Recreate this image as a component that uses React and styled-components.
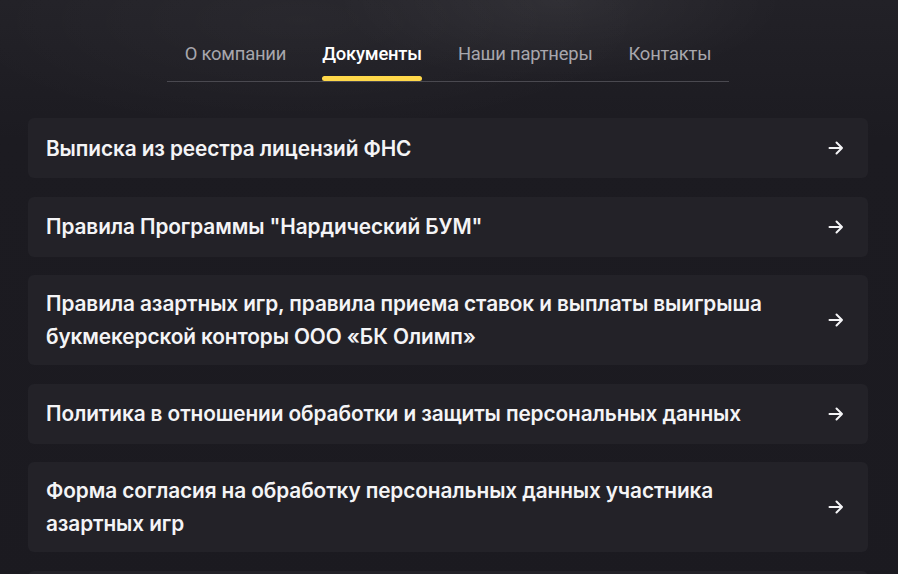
import React from "react";
import styled, { createGlobalStyle } from "styled-components";

const GlobalStyle = createGlobalStyle`
  html, body {
    margin: 0;
    padding: 0;
    background: #1b1a20;
  }
  * {
    box-sizing: border-box;
  }
`;

const Page = styled.div`
  min-height: 574px;
  background:
    radial-gradient(ellipse 320px 120px at 560px 0px, rgba(255, 255, 255, 0.06), transparent 70%),
    radial-gradient(ellipse 500px 160px at 300px 20px, rgba(255, 255, 255, 0.035), transparent 70%),
    linear-gradient(180deg, #222127 0px, #1c1b21 140px, #1b1a20 100%);
  padding: 36px 30px 0 28px;
  font-family: Inter, "Noto Sans", sans-serif;
  overflow: hidden;
`;

const Tabs = styled.nav`
  display: flex;
  justify-content: center;
  gap: 36px;
  width: 562px;
  margin: 0 auto;
  padding: 0 17px;
  border-bottom: 1px solid #4a4950;
`;

const Tab = styled.a`
  position: relative;
  display: block;
  padding: 6px 0 15px;
  font-family: Roboto, "Liberation Sans", sans-serif;
  font-size: 18.4px;
  line-height: 24px;
  letter-spacing: -0.2px;
  color: ${(p) => (p.$active ? "#ffffff" : "#a8a7ad")};
  font-weight: ${(p) => (p.$active ? 500 : 400)};
  text-decoration: none;
  cursor: pointer;

  &::after {
    content: "";
    display: ${(p) => (p.$active ? "block" : "none")};
    position: absolute;
    left: 0;
    right: 0;
    bottom: 0;
    height: 5px;
    border-radius: 3px;
    background: #ffd84a;
  }
`;

const List = styled.div`
  display: flex;
  flex-direction: column;
  gap: 18.5px;
  margin-top: 36px;
`;

const DocRow = styled.a`
  display: flex;
  align-items: center;
  justify-content: space-between;
  gap: 40px;
  min-height: 60px;
  padding: 12px 24px 12px 18px;
  background: #232228;
  border-radius: 6px;
  color: #f4f4f6;
  text-decoration: none;
  cursor: pointer;
`;

const DocTitle = styled.span`
  font-size: 20.8px;
  font-weight: 600;
  line-height: 33px;
  letter-spacing: -0.1px;
  max-width: 740px;
`;

const Arrow = () => (
  <svg width="16" height="16" viewBox="0 0 16 16" fill="none" style={{ flexShrink: 0 }}>
    <path d="M1.5 8h12.5M8.5 2.5 14 8l-5.5 5.5" stroke="#f4f4f6" strokeWidth="2" strokeLinecap="round" strokeLinejoin="round" />
  </svg>
);

const tabs = ["О компании", "Документы", "Наши партнеры", "Контакты"];

const docs = [
  "Выписка из реестра лицензий ФНС",
  'Правила Программы "Нардический БУМ"',
  "Правила азартных игр, правила приема ставок и выплаты выигрыша букмекерской конторы ООО «БК Олимп»",
  "Политика в отношении обработки и защиты персональных данных",
  "Форма согласия на обработку персональных данных участника азартных игр",
  "Свидетельство о членстве в СРО",
];

export default function App() {
  return (
    <>
      <GlobalStyle />
      <Page>
        <Tabs>
          {tabs.map((t) => (
            <Tab key={t} $active={t === "Документы"}>
              {t}
            </Tab>
          ))}
        </Tabs>
        <List>
          {docs.map((d) => (
            <DocRow key={d}>
              <DocTitle>{d}</DocTitle>
              <Arrow />
            </DocRow>
          ))}
        </List>
      </Page>
    </>
  );
}
